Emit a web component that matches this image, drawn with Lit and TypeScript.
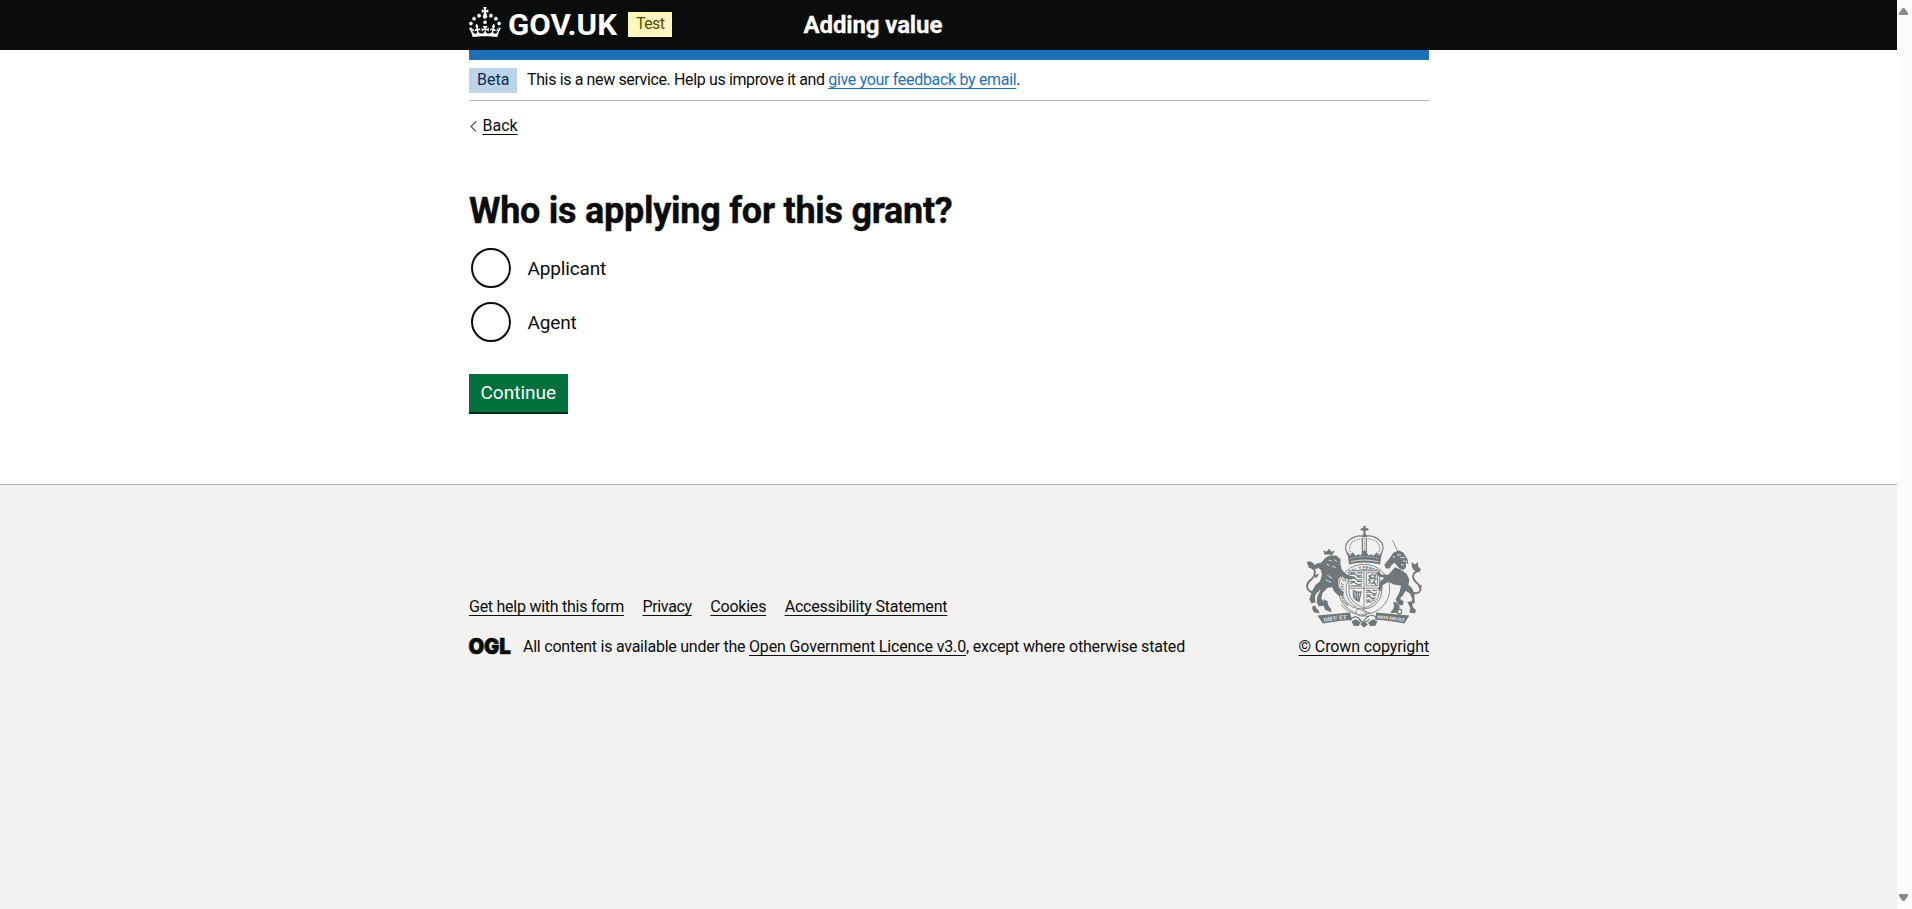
import { LitElement, html, svg, css } from "lit";
import { customElement } from "lit/decorators.js";

const beast = svg`
  <path class="f" d="M108 124l14-6 18 2 12 10-1 14 4 16 10 12 14 8 10 2-2 8-16-1-18-8-8 10-1 18 7 12 11 10-3 8-14 0-13-13-5-12-14 2-16 16-3 16 10 14 0 8-18 1-6-11 2-18 10-20-8 4-9 14 1 20-12 2-6-12 8-24 10-18 14-12 6-20-4-14-10-8 0-10 12-4z"/>
  <path class="f" d="M67 271q-2 14 8 20l14 1-4-10q-9-4-8-12zM101 250q-3 14 4 32l20 8-3-12q-10-12-9-22z"/>
  <path class="s w5" d="M86 224q-19 12-31-2-10-16 6-29 18-14 12-30-4-9-17-10"/>
  <path class="f" d="M50 138q17-5 24 10l7-6 8 5-7 12-15 1-12-9zM72 178l16-4-10 14z"/>
  <path class="f" d="M103 116l-3-13 9 5 8-9 8 9 9-4-6 13z"/>
  <path class="g w2" d="M116 133l9 2m-15 10l9 4m13-18l9 7m-14 13l10 4m-25 23l15 10m-20 4l16 7"/>`;

@customElement("royal-arms")
export class RoyalArms extends LitElement {
  static styles = css`
    :host { display: block; width: 116px; height: 103px; }
    svg { display: block; width: 100%; height: 100%; }
    .f { fill: #6f777b; }
    .s { fill: none; stroke: #6f777b; }
    .g { fill: none; stroke: #f3f2f1; }
    .b { fill: #f3f2f1; }
    .w2 { stroke-width: 2.5; }
    .w3 { stroke-width: 3.5; }
    .w5 { stroke-width: 5.5; }
    .dots { stroke-dasharray: 2.5 3; }
    text { font: 700 14px Roboto, sans-serif; fill: #6f777b; }
    .motto { font: 700 17px "Liberation Serif", serif; fill: #f3f2f1; }
    .right { font-size: 14px; }
  `;
  render() {
    return html`<svg viewBox="48 28 348 308" aria-hidden="true">
      ${svg`
      <path class="f" d="M220 30h7v7h8v7h-8v8h-7v-8h-8v-7h8z"/>
      <circle class="f" cx="223.5" cy="58" r="6"/>
      <path class="s w3" d="M181 126q-24-28-8-48 22-24 50-16 28-8 50 16 16 20-8 48"/>
      <path class="s w3 dots" d="M187 119q-14-20-4-36 14-16 36-13m42 49q14-20 4-36-14-16-36-13"/>
      <path class="s w3" d="M217 66v44m12-44v44"/>
      <path class="s w3 dots" d="M223 66v44"/>
      <path class="f" d="M172 108l9 11 7-10 9 11 8-5 7 4 7-14h9l7 14 8-4 8 5 9-11 7 10 9-11-6 38q-46-12-93 0z"/>
      <path class="g w2" d="M181 138q42-11 85 0"/>
      <path class="g w2 dots" d="M182 128q42-12 83 0"/>
      <ellipse class="s w2" cx="222" cy="220" rx="77" ry="75"/>
      <ellipse class="s w2" cx="222" cy="220" rx="54" ry="59"/>
      <path id="garter" fill="none" d="M176 265A62 63 0 1 1 268 265"/>
      <text><textPath href="#garter">HONI SOIT QUI MAL Y PENSE</textPath></text>
      <path class="b" d="M177 165h91v65q-3 33-45 47-42-14-46-47z"/>
      <path class="s w2" d="M177 165h91v65q-3 33-45 47-42-14-46-47zM222 165v112M177 217h91"/>
      <path class="s w3" d="M180 171h15m5 0h18M181 177q9-6 17 0t18 0M180 184h15m5 0h18M181 190q9-6 17 0t18 0M180 197h15m5 0h18M181 203q9-6 17 0t18 0M181 210h35"/>
      <path class="s w2" d="M229 171h33v39h-33z"/>
      <path class="s w3" d="M236 204l6-8-7-4 6-5 6 3-7-10 8-4 8 6-7 5 9 2-7 6 5 10-8-5-5 5M236 178l3 7m19-10l-3 7"/>
      <path class="s w3" d="M190 224q8 7 23 4l-6 29q-17-5-17-20zM195 228v22m5-21v25m6-25l-2 27"/>
      <path class="s w3" d="M228 224h14m5 0h15M229 231q8-6 16 0t16 0M228 238h14m5 0h12M229 245q8-6 14 0t13 0M228 253h12m4 0h10M229 260q9-5 16 0"/>
      ${beast}
      <path class="f" d="M298 128l12-17 17-7 12 5 13 20 3 17-7-7 0 15-9 9-13-7-12-15-8 5-8 13-11-2-4-10z"/>
      <path class="s w2" d="M323 106l-15-32"/>
      <path class="g w2" d="M321 117l12 1m-2 7l14 1m-6 9l12 2m-43-15l7 3m18 21l10 2"/>
      <path class="f" d="M315 154l15 6 18 12 10 20-3 15 10 8 8 17 1 30-12 2 5-14-7-17-13-8-8 13-10 11 12 7-2 13-14-3-8-15 12-23 4-18-21-4-18-8-16 10-5 18-8-4 4-23 14-13-15-3-9-11 6-5 10 9 20 1z"/>
      <path class="f" d="M310 257q15 2 18 17l-4 16-20 2q-4-5 5-12l3-9zM352 258l9 19-3 14 17 1 3-9-9-9-4-17z"/>
      <path class="s w5" d="M362 228q23 10 29-4 3-13-12-24-14-12-8-25 5-11 19-9"/>
      <path class="f" d="M366 154l-2-15 12 7 7-8 2 15 9 9-13 4-9-2zM384 211l12-4-5 14z"/>
      <path class="s w5 dots" d="M348 175q15 21-8 44-14 20-11 58"/>
      <circle class="s w3" cx="328" cy="287" r="7"/>
      <circle class="b" cx="208" cy="285" r="13"/>
      <path class="s w2" d="M154 268q26 26 52 28l32 7M169 259q15 17 42 22l30 11M198 287q10-20 26-3t-10 17q-17-3-16-14z"/>
      <path class="s w3" d="M180 314q10-15 24-9l14 15 14-17q20-13 31 10M207 310q13 19 32 0"/>
      <path class="f" d="M185 316l12-6 16 10-8 11-15-2zM234 320l16-10 12 6-5 13-16 2zM211 325l11-8 12 8-12 11z"/>
      <path class="f" d="M82 299l98-9 6 22q-43 3-87 11zM258 290l100 9-15 24q-37-8-87-11z"/>
      <path id="left" fill="none" d="M102 318q36-8 82-9"/>
      <path id="right" fill="none" d="M261 308q39 1 86 11"/>
      <text class="motto"><textPath href="#left">DIEU ET</textPath></text>
      <text class="motto right"><textPath href="#right">MON DROIT</textPath></text>`}
    </svg>`;
  }
}

@customElement("app-root")
export class AppRoot extends LitElement {
  static styles = css`
    :host { display: flex; height: 100vh; overflow: hidden; color: #0b0c0c; background: #fff; font: 400 16px/20px Roboto, "Liberation Sans", sans-serif; }
    * { box-sizing: border-box; }
    .page { flex: 1; display: flex; flex-direction: column; }
    .scrollbar { width: 15px; background: #fcfcfc; display: flex; flex-direction: column; justify-content: space-between; align-items: center; padding: 8px 2px 8px 0; }
    .scrollbar svg { display: block; width: 9px; height: 7px; fill: #8b8b8b; }
    .wrap { width: 960px; margin-left: 469px; }
    a { color: inherit; text-decoration: underline; text-decoration-thickness: 1px; text-underline-offset: 3px; text-decoration-skip-ink: none; }
    header { height: 50px; background: #0b0c0c; color: #fff; }
    header .wrap { display: flex; align-items: flex-start; }
    .logo { display: block; width: 150px; height: 40px; fill: #fff; }
    .logo text { font: 700 29px Roboto, sans-serif; }
    .tag { height: 25px; padding: 0 8px; line-height: 23px; }
    .test { width: 44px; margin: 12px 0 0 9px; background: #fff7bf; color: #594d00; letter-spacing: -.6px; }
    .service { margin: 10px 0 0 131.5px; font-weight: 700; font-size: 24px; line-height: 30px; letter-spacing: -.12px; white-space: nowrap; -webkit-text-stroke: .3px #fff; }
    .bar { height: 10px; background: #1d70b8; }
    .phase { display: flex; height: 41px; padding-top: 8px; border-bottom: 1px solid #b1b4b6; }
    .beta { width: 48px; background: #bbd4ea; color: #0c2d4a; margin-right: 10px; }
    .phase p { margin: 0; line-height: 23px; letter-spacing: -.37px; }
    .phase a { color: #1d70b8; letter-spacing: -.32px; }
    .back { display: flex; align-items: center; height: 20px; margin-top: 15px; }
    .back svg { width: 7px; height: 11px; margin: 0 5.5px 0 1px; fill: none; stroke: #505a5f; stroke-width: 1.2; }
    h1 { margin: 50px 0 0; font-size: 36px; line-height: 50px; letter-spacing: -.27px; -webkit-text-stroke: .4px #0b0c0c; }
    .radios { display: flex; flex-direction: column; gap: 14px; margin: 12px 0 0 2px; }
    .radio { display: flex; align-items: center; gap: 16.5px; height: 40px; font-size: 19px; letter-spacing: -.15px; }
    .name { padding-top: 1px; }
    .ring { width: 40px; height: 40px; border: 2px solid #0b0c0c; border-radius: 50%; }
    .btn { display: block; width: 99px; height: 38px; margin-top: 32px; padding: 0 0 0 11.5px; border: 0; background: #00703c; box-shadow: 0 2px 0 #002d18; color: #fff; font: 400 19px/38px Roboto, sans-serif; text-align: left; }
    footer { flex: 1; margin-top: 72px; border-top: 1px solid #b1b4b6; background: #f3f2f1; }
    footer .wrap { display: flex; justify-content: space-between; align-items: flex-end; height: 172px; }
    .links { display: flex; gap: 18.5px; margin-bottom: 20px; }
    .l1 { letter-spacing: -.26px; } .l2 { letter-spacing: -.34px; } .l3 { letter-spacing: -.22px; } .l4 { letter-spacing: -.2px; }
    .licence { display: flex; align-items: center; white-space: nowrap; letter-spacing: -.234px; }
    .licence a { letter-spacing: -.146px; }
    .rest { letter-spacing: -.17px; }
    .ogl { display: block; width: 44px; height: 20px; margin-right: 10px; overflow: visible; }
    .ogl text { font: 900 22px Inter, sans-serif; fill: #0b0c0c; stroke: #0b0c0c; stroke-width: .6; }
    .crest { display: flex; flex-direction: column; align-items: flex-end; letter-spacing: -.12px; }
    .crest royal-arms { margin: 0 7px 9px 0; }
  `;
  render() {
    return html`
      <div class="page">
        <header><div class="wrap">
          <svg class="logo" viewBox="0 0 150 40" role="img">
            <path transform="translate(0 7)" d="M22.6 10.4c-1 .4-2-.1-2.400-1-.4-.9.1-2 1-2.400.9-.4 2 .1 2.400 1s-.1 2-1 2.400m-5.900 6.700c-.9.4-2-.1-2.400-1-.4-.9.1-2 1-2.400.9-.4 2 .1 2.400 1s-.1 2-1 2.400m10.800-3.700c-1 .4-2-.1-2.400-1-.4-.9.1-2 1-2.400.9-.4 2 .1 2.400 1s0 2-1 2.400m3.300 4.800c-1 .4-2-.1-2.400-1-.4-.9.1-2 1-2.400.9-.4 2 .1 2.400 1s-.1 2-1 2.400M17 4.700l2.300 1.200V2.500l-2.300.7-.2-.2.9-3h-3.400l.9 3-.2.2c-.1.1-2.300-.7-2.300-.7v3.400L15 4.700c.1.1.1.2.2.2l-1.300 4c-.1.2-.1.4-.1.6 0 1.100.8 2 1.900 2.200h.7c1-.2 1.900-1.100 1.900-2.100 0-.2 0-.4-.1-.6l-1.300-4c-.1-.2 0-.2.1-.3m-7.600 5.700c.9.4 2-.1 2.400-1 .4-.9-.1-2-1-2.400-.9-.4-2 .1-2.400 1s0 2 1 2.400m-5 3c.9.4 2-.1 2.400-1 .4-.9-.1-2-1-2.400-.9-.4-2 .1-2.400 1s.1 2 1 2.400m-3.200 4.800c.9.4 2-.1 2.400-1 .4-.9-.1-2-1-2.400-.9-.4-2 .1-2.400 1s0 2 1 2.400m14.800 11c4.400 0 8.600.3 12.300.8 1.100-4.500 2.400-7 3.700-8.800l-2.500-.9c.2 1.300.3 1.900 0 2.700-.4-.4-.8-1.100-1.100-2.300l-1.200 4c.7-.5 1.300-.8 2-.9-1.100 2.500-2.600 3.100-3.500 3-1.100-.2-1.700-1.200-1.500-2.100.3-1.200 1.500-1.500 2.100-.1 1.100-2.300-.8-3-2-2.300 1.900-1.900 2.100-3.500.6-5.600-2.100 1.600-2.100 3.200-1.200 5.500-1.200-1.400-3.200-.6-2.500 1.600.9-1.400 2.100-.5 1.900.8-.2 1.100-1.700 2.100-3.500 1.900-2.700-.2-2.900-2.100-2.900-3.600.7-.1 1.900.5 2.900 1.900l.4-4.300c-1.100 1.100-2.100 1.400-3.200 1.400.4-1.200 2.100-3 2.100-3h-5.400s1.700 1.900 2.100 3c-1.100 0-2.100-.2-3.200-1.400l.4 4.300c1-1.400 2.200-2 2.900-1.900-.1 1.500-.2 3.400-2.900 3.600-1.900.2-3.400-.8-3.500-1.900-.2-1.300 1-2.200 1.900-.8.7-2.300-1.200-3-2.500-1.600.9-2.200.9-3.900-1.200-5.500-1.500 2-1.300 3.700.6 5.600-1.200-.7-3.100 0-2 2.300.6-1.400 1.800-1.100 2.100.1.2.9-.3 1.900-1.500 2.100-.9.2-2.400-.5-3.500-3 .6 0 1.200.3 2 .9l-1.200-4c-.3 1.100-.7 1.900-1.100 2.300-.3-.8-.2-1.400 0-2.700l-2.900.9C1.300 23 2.600 25.500 3.700 30c3.700-.5 7.900-.8 12.300-.8"/>
            <text x="39" y="34.500" textLength="109" lengthAdjust="spacingAndGlyphs">GOV.UK</text>
          </svg>
          <span class="tag test">Test</span>
          <span class="service">Adding value</span>
        </div></header>
        <div class="wrap">
          <div class="bar"></div>
          <div class="phase"><span class="tag beta">Beta</span><p>This is a new service. Help us improve it and <a>give your feedback by email</a>.</p></div>
          <div class="back"><svg viewBox="0 0 7 11"><path d="M6 .5L1 5.500l5 5"/></svg><a>Back</a></div>
          <h1>Who is applying for this grant?</h1>
          <div class="radios">
            <label class="radio"><span class="ring"></span><span class="name">Applicant</span></label>
            <label class="radio"><span class="ring"></span><span class="name">Agent</span></label>
          </div>
          <button class="btn">Continue</button>
        </div>
        <footer><div class="wrap">
          <div>
            <div class="links"><a class="l1">Get help with this form</a><a class="l2">Privacy</a><a class="l3">Cookies</a><a class="l4">Accessibility Statement</a></div>
            <div class="licence">
              <svg class="ogl" viewBox="0 0 44 20"><text x="-.5" y="17" textLength="42" lengthAdjust="spacingAndGlyphs">OGL</text></svg>
              <span>All content is available under the <a>Open Government Licence v3.0</a><span class="rest">, except where otherwise stated</span></span>
            </div>
          </div>
          <div class="crest"><royal-arms></royal-arms><a>© Crown copyright</a></div>
        </div></footer>
      </div>
      <div class="scrollbar">
        <svg viewBox="0 0 9 7"><path d="M3.500 0h2L9 5v2H0V5z"/></svg>
        <svg viewBox="0 0 9 7"><path d="M3.500 7h2L9 2V0H0v2z"/></svg>
      </div>`;
  }
}
